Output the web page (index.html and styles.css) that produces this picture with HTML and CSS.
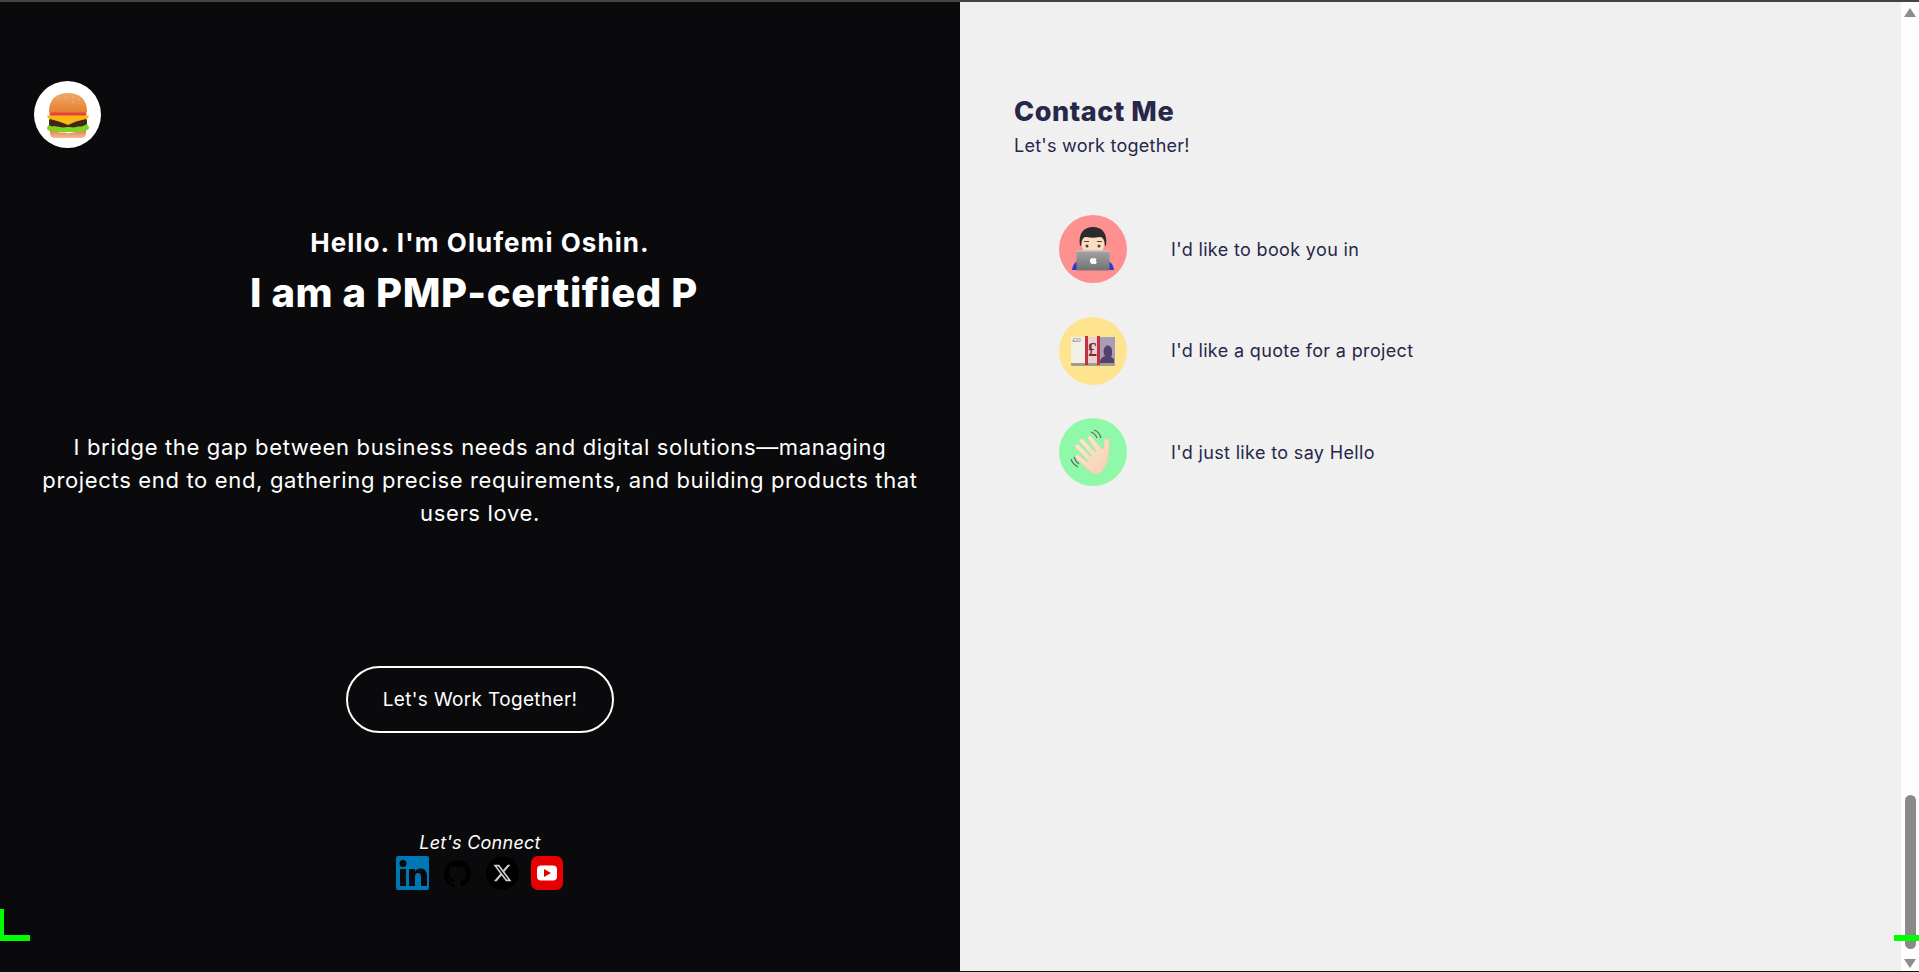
FILE: index.html
```html
<!DOCTYPE html>
<html lang="en">
<head>
<meta charset="utf-8">
<title>Olufemi Oshin</title>
<link rel="stylesheet" href="styles.css">
</head>
<body>
<div class="top-strip"></div>
<div class="page">
  <section class="left">
    <div class="logo">
      <svg width="44" height="46" viewBox="0 0 44 46">
        <defs>
          <linearGradient id="bun" x1="0" y1="0" x2="0" y2="1"><stop offset="0" stop-color="#f0a868"/><stop offset="1" stop-color="#e37d2e"/></linearGradient>
          <linearGradient id="bun2" x1="0" y1="0" x2="0" y2="1"><stop offset="0" stop-color="#e0813f"/><stop offset="1" stop-color="#f4bb96"/></linearGradient>
        </defs>
        <path d="M3 19C3 7 11 1 22 1s19 6 19 18c0 2-1 3-3 3H6c-2 0-3-1-3-3z" fill="url(#bun)"/>
        <g fill="#f7dfc4"><circle cx="12" cy="6" r=".6"/><circle cx="20" cy="6" r=".6"/><circle cx="27" cy="5" r=".6"/><circle cx="33" cy="7" r=".6"/><circle cx="27" cy="10" r=".6"/></g>
        <rect x="3.500" y="20.500" width="37" height="4" rx="2" fill="#ea3f3f"/>
        <rect x="3" y="26" width="38" height="10" rx="3" fill="#43261a"/>
        <path d="M1 37c0-2 1-4 2-4 2 1 3 2 5 1 2 0 4 1 6 1 3 1 5 0 8 0s5 1 8 0 5 0 7-1l4-2c1 1 2 3 2 4-1 3-5 3-8 4H9c-3 0-7-1-8-3z" fill="#7ed321"/>
        <path d="M4 38c2 1 5 1 7 2 4 1 7 0 10 1s6-1 9-1 7-1 10-2v3c0 3-2 5-5 5H9c-3 0-5-2-5-5z" fill="url(#bun2)"/>
        <path d="M1 23.500h42l-1 3-12 3-8 3.500-9-3.500-11-3z" fill="#f9b912"/>
      </svg>
    </div>
    <p class="hello">Hello. I'm Olufemi Oshin.</p>
    <h1 class="typed">I am a PMP-certified P</h1>
    <p class="intro">I bridge the gap between business needs and digital solutions—managing projects end to end, gathering precise requirements, and building products that users love.</p>
    <a class="cta">Let's Work Together!</a>
    <p class="connect">Let's Connect</p>
    <div class="socials">
      <svg width="33" height="34" viewBox="0 0 33 34"><path fill-rule="evenodd" fill="#0077b5" d="M2 0h29a2 2 0 0 1 2 2v30a2 2 0 0 1-2 2H2a2 2 0 0 1-2-2V2a2 2 0 0 1 2-2zM4 13v17h6V13zM7 4a3.500 3.500 0 1 0 0 7 3.500 3.500 0 0 0 0-7zM13 13v17h6v-9c0-2.500 1-4 3-4s3 1.500 3 4v9h6V20c0-5-2.500-7.500-6.500-7.500-2.500 0-4 1-5.500 3v-2.500z"/></svg>
      <svg width="27" height="27" viewBox="0 0 24 24"><path fill="#000" d="M12 .297c-6.630 0-12 5.373-12 12 0 5.303 3.438 9.800 8.205 11.385.6.113.82-.258.82-.577 0-.285-.01-1.040-.015-2.040-3.338.724-4.042-1.610-4.042-1.610C4.422 18.070 3.633 17.700 3.633 17.700c-1.087-.744.084-.729.084-.729 1.205.084 1.838 1.236 1.838 1.236 1.070 1.835 2.809 1.305 3.495.998.108-.776.417-1.305.76-1.605-2.665-.3-5.466-1.332-5.466-5.930 0-1.310.465-2.380 1.235-3.220-.135-.303-.54-1.523.105-3.176 0 0 1.005-.322 3.300 1.230.96-.267 1.980-.399 3-.405 1.020.006 2.040.138 3 .405 2.280-1.552 3.285-1.230 3.285-1.230.645 1.653.24 2.873.12 3.176.765.84 1.230 1.910 1.230 3.220 0 4.610-2.805 5.625-5.475 5.920.42.36.81 1.096.81 2.220 0 1.606-.015 2.896-.015 3.286 0 .315.21.69.825.57C20.565 22.092 24 17.592 24 12.297c0-6.627-5.373-12-12-12"/></svg>
      <svg width="33" height="34" viewBox="0 0 33 34"><circle cx="16.500" cy="17" r="16.500" fill="#000"/><g transform="translate(7.500 8) scale(.75)"><path fill="#d0d0d0" d="M18.901 1.153h3.680l-8.040 9.190L24 22.846h-7.406l-5.800-7.584-6.638 7.584H.474l8.600-9.830L0 1.154h7.594l5.243 6.932ZM17.610 20.644h2.039L6.486 3.240H4.298Z"/></g></svg>
      <svg class="icon-yt" width="32" height="34" viewBox="0 0 32 34"><rect width="32" height="34" rx="7" fill="#e60000"/><rect x="6" y="9.500" width="20" height="15" rx="4" fill="#fff"/><path d="M13 13l7 4-7 4z" fill="#e60000"/></svg>
    </div>
  </section>
  <section class="right">
    <h2 class="contact-title">Contact Me</h2>
    <p class="contact-sub">Let's work together!</p>
    <ul class="options">
      <li class="option">
        <span class="bubble bubble-red">
          <svg width="42" height="46" viewBox="0 0 42 46">
            <defs><linearGradient id="lap" x1="0" y1="0" x2="0" y2="1"><stop offset="0" stop-color="#a4a4a4"/><stop offset="1" stop-color="#727272"/></linearGradient></defs>
            <path d="M0 44c1-6 3-8 8-10h26c5 2 7 4 8 10z" fill="#2a3ad0"/>
            <ellipse cx="21" cy="18" rx="11" ry="13" fill="#f8dcc4"/>
            <path d="M8 20C6 7 12 1 21 1s15 6 13 19c-1 0-1-1-1.500-4-.5-3-2-5-5-5-4 1-9 1-13 0-3 0-4.500 2-5 5-.5 3-.5 4-1.500 4z" fill="#2c2c2e"/>
            <path d="M12 15.500h5M25 15.500h5" stroke="#5a4030" stroke-width="1.200"/>
            <circle cx="15" cy="20" r="1.500" fill="#5a3a1e"/><circle cx="27" cy="20" r="1.500" fill="#5a3a1e"/>
            <rect x="4.500" y="24.500" width="33" height="20" rx="1.500" fill="url(#lap)"/>
            <rect x="4.500" y="24.500" width="33" height="1" fill="#cfcfcf"/>
            <path d="M21.500 32.500c1-.5 2.500-.5 3 .5-1.200 1-.8 2.500.4 3-.6 1.500-1.400 2.500-2.400 2-.8-.3-1.200-.3-2 0-1.400.4-2.800-2.500-2.500-4 .3-1.800 2-2 3.500-1.500z" fill="#fff"/>
          </svg>
        </span>
        <span class="option-label">I'd like to book you in</span>
      </li>
      <li class="option">
        <span class="bubble bubble-yellow">
          <svg width="44" height="30" viewBox="0 0 44 30">
            <rect x="0" y="26" width="44" height="4" rx="1" fill="#a09c90"/>
            <rect x="0" y="1" width="44" height="26" rx="1" fill="#f1efe6"/>
            <rect x="26" y="1" width="18" height="26" fill="#a99cb9"/>
            <path d="M29 27c0-5 3-6 5-7-2-3-2-8 1-10 3-1.500 6 1 6 5 0 3 0 5-1 6l3 2v4z" fill="#53436c"/>
            <rect x="15" y="1" width="14" height="26" fill="#eccfd2"/>
            <rect x="14" y="0" width="3" height="29" fill="#c2323f"/>
            <rect x="26" y="0" width="3" height="29" fill="#c2323f"/>
            <text x="21.500" y="20" class="note-sign">£</text>
            <text x="1.500" y="6" class="note-small">£20</text>
          </svg>
        </span>
        <span class="option-label">I'd like a quote for a project</span>
      </li>
      <li class="option">
        <span class="bubble bubble-green">
          <svg width="46" height="46" viewBox="0 0 46 46">
            <defs><linearGradient id="hand" x1="0" y1="0" x2="1" y2="1"><stop offset="0" stop-color="#feeadb"/><stop offset="1" stop-color="#f3cfae"/></linearGradient></defs>
            <path d="M28 45c-5 0-8-2-11-5L6 29c-2-2 1-4 3-3l8 7 1-1L6 19c-2-2 1-5 3-3l12 12 1-1L10 13c-2-2 1-4 3-3l12 13 1-1-8-12c-1-3 2-4 4-2l10 12 2-1 0-7c1-3 4-3 5-1 1 6 0 13-1 19-1 8-8 15-10 15z" fill="url(#hand)" stroke="#e8c4a4" stroke-width=".5"/>
            <path d="M24 1c3 1 6 4 7 8M21 3c3 1 5 3 6 6M1 30c1 3 3 6 7 8M4 28c1 3 2 5 5 7" fill="none" stroke="#5d6e66" stroke-width="1.200"/>
          </svg>
        </span>
        <span class="option-label">I'd just like to say Hello</span>
      </li>
    </ul>
  </section>
  <aside class="scrollbar">
    <span class="arrow-up"></span>
    <span class="thumb"></span>
    <span class="arrow-down"></span>
  </aside>
</div>
<div class="bottom-line"></div>
<span class="mark-corner"></span>
<span class="mark-bar"></span>
</body>
</html>
```
FILE: styles.css
```css
* { box-sizing: border-box; }
html, body { margin: 0; padding: 0; height: 100%; overflow: hidden; }
body { display: flex; flex-direction: column; height: 972px; font-family: "Inter", "Open Sans", sans-serif; position: relative; }
.top-strip { height: 2px; background: #434343; flex: none; }
.bottom-line { height: 1px; background: #111; flex: none; }
.page { flex: 1; display: flex; min-height: 0; }
p, h1, h2, ul { margin: 0; padding: 0; }

.left { width: 960px; flex: none; background: #0a0a0c; color: #fff; display: flex; flex-direction: column; align-items: center; text-align: center; }
.logo { align-self: flex-start; width: 67px; height: 67px; border-radius: 50%; background: #fff; margin: 79px 0 0 34px; display: flex; align-items: center; justify-content: center; }
.hello { font-size: 26px; line-height: 36px; font-weight: 700; margin-top: 77px; letter-spacing: 1.05px; }
.typed { font-size: 40px; line-height: 56px; font-weight: 800; margin-top: 4px; letter-spacing: 0.6px; padding-right: 12px; }
.intro { width: 890px; font-size: 22px; line-height: 33px; font-weight: 400; margin-top: 110px; letter-spacing: 0.66px; }
.cta { width: 268px; height: 67px; border: 2px solid #fff; border-radius: 34px; font-size: 19px; letter-spacing: 0.35px; margin-top: 136px; display: flex; align-items: center; justify-content: center; }
.connect { font-size: 18px; line-height: 24px; letter-spacing: 0.25px; font-style: italic; margin-top: 98px; }
.socials { display: flex; align-items: center; gap: 15px; margin: 1px 0 0 -2px; height: 34px; }
.icon-yt { margin-left: -3px; }

.right { flex: 1; background: #f0f0f0; color: #27274a; padding: 92px 0 0 54px; }
.contact-title { font-size: 27px; line-height: 36px; font-weight: 800; letter-spacing: 0.6px; }
.contact-sub { font-size: 18px; line-height: 26px; margin-top: 3px; letter-spacing: 0.25px; }
.options { list-style: none; margin: 56px 0 0 45px; display: flex; flex-direction: column; gap: 33.500px; }
.option { display: flex; align-items: center; gap: 44px; height: 68px; }
.bubble { width: 68px; height: 68px; border-radius: 50%; display: flex; align-items: center; justify-content: center; flex: none; overflow: hidden; }
.bubble-red { background: #ff9090; }
.bubble-yellow { background: #ffe48f; }
.bubble-green { background: #90f9a9; }
.option-label { font-size: 18px; letter-spacing: 0.35px; }
.note-sign { font: 700 18px "Liberation Serif", serif; fill: #7a2a30; text-anchor: middle; }
.note-small { font: 400 5px "Liberation Sans", sans-serif; fill: #777; }

.scrollbar { width: 18px; flex: none; background: #fdfdfd; display: flex; flex-direction: column; align-items: center; padding: 6px 0 3px; }
.arrow-up { width: 0; height: 0; border-left: 6px solid transparent; border-right: 6px solid transparent; border-bottom: 9px solid #8c8c8c; }
.arrow-down { width: 0; height: 0; border-left: 6px solid transparent; border-right: 6px solid transparent; border-top: 9px solid #8c8c8c; }
.thumb { width: 11px; height: 154px; border-radius: 6px; background: #8a8a8a; margin: auto 0 10px; }

.mark-corner { position: absolute; left: 0; top: 909px; width: 30px; height: 32px; border-left: 4px solid #00ff00; border-bottom: 6px solid #00ff00; }
.mark-bar { position: absolute; left: 1894px; top: 935px; width: 25px; height: 6px; background: #00ff00; }
```
